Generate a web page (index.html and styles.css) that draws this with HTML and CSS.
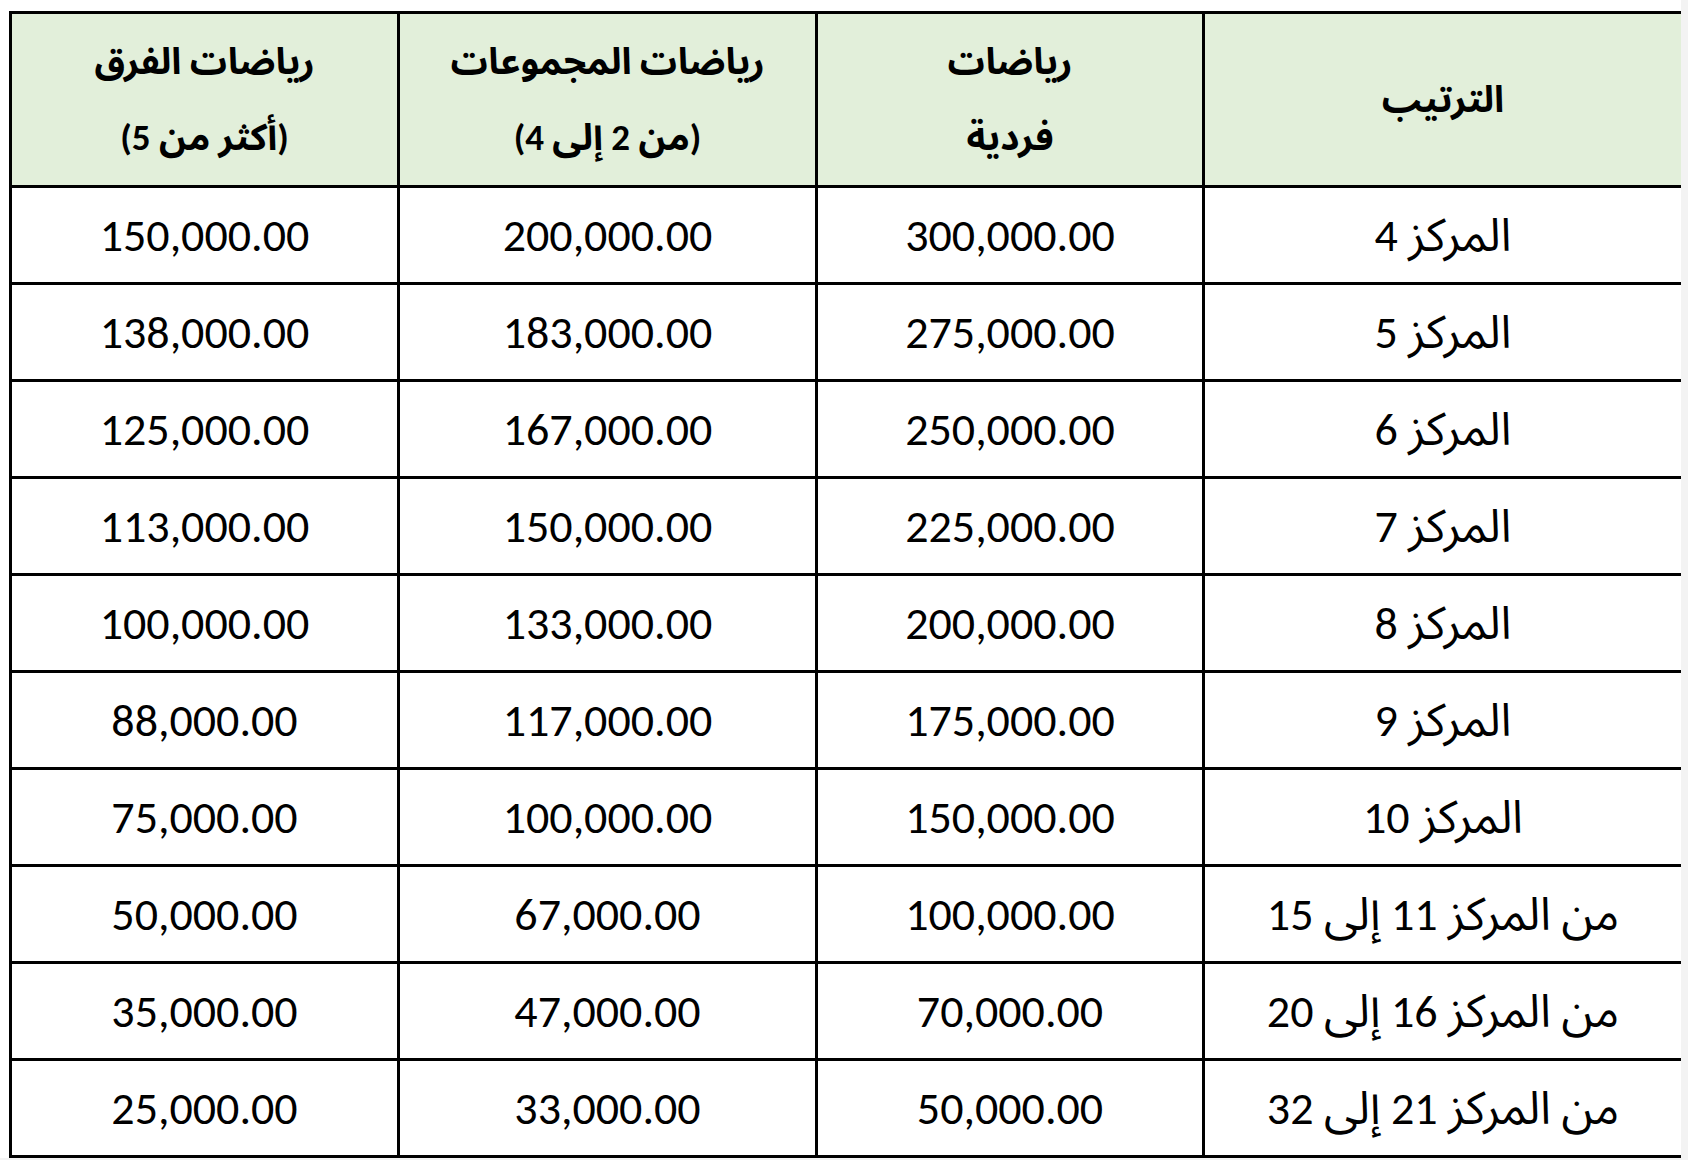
FILE: index.html
```html
<!DOCTYPE html>
<html lang="ar">
<head>
<meta charset="utf-8">
<title>جدول الجوائز</title>
<link rel="stylesheet" href="styles.css">
</head>
<body>
<table class="prizes" dir="rtl">
  <colgroup>
    <col class="c-rank">
    <col class="c-single">
    <col class="c-group">
    <col class="c-team">
  </colgroup>
  <thead>
    <tr>
      <th>الترتيب</th>
      <th>رياضات<br>فردية</th>
      <th>رياضات المجموعات<br>(من 2 إلى 4)</th>
      <th>رياضات الفرق<br>(أكثر من 5)</th>
    </tr>
  </thead>
  <tbody>
    <tr><td>المركز 4</td><td>300,000.00</td><td>200,000.00</td><td>150,000.00</td></tr>
    <tr><td>المركز 5</td><td>275,000.00</td><td>183,000.00</td><td>138,000.00</td></tr>
    <tr><td>المركز 6</td><td>250,000.00</td><td>167,000.00</td><td>125,000.00</td></tr>
    <tr><td>المركز 7</td><td>225,000.00</td><td>150,000.00</td><td>113,000.00</td></tr>
    <tr><td>المركز 8</td><td>200,000.00</td><td>133,000.00</td><td>100,000.00</td></tr>
    <tr><td>المركز 9</td><td>175,000.00</td><td>117,000.00</td><td>88,000.00</td></tr>
    <tr><td>المركز 10</td><td>150,000.00</td><td>100,000.00</td><td>75,000.00</td></tr>
    <tr><td>من المركز 11 إلى 15</td><td>100,000.00</td><td>67,000.00</td><td>50,000.00</td></tr>
    <tr><td>من المركز 16 إلى 20</td><td>70,000.00</td><td>47,000.00</td><td>35,000.00</td></tr>
    <tr><td>من المركز 21 إلى 32</td><td>50,000.00</td><td>33,000.00</td><td>25,000.00</td></tr>
  </tbody>
</table>
</body>
</html>
```

FILE: styles.css
```css
html {
  margin: 0;
  padding: 0;
  background: #f3f3f3;
}

body {
  margin: 0;
  padding: 11px 0 0 9px;
  width: 1672px;
  background: #ffffff;
  font-family: "Carlito", "Lato", "Noto Sans Arabic", "DejaVu Sans", sans-serif;
  color: #000;
}

.prizes {
  width: 1672px;
  border-collapse: collapse;
  table-layout: fixed;
  border: 3px solid #000;
}

.c-rank { width: 479px; }
.c-single { width: 387px; }
.c-group { width: 418px; }
.c-team { width: 388px; }

.prizes th,
.prizes td {
  border: 3px solid #000;
  text-align: center;
  vertical-align: middle;
  padding: 0;
}

.prizes th {
  background: #e2efda;
  height: 171px;
  font-weight: bold;
  font-size: 37px;
  line-height: 76px;
}

.prizes td {
  height: 94px;
  font-size: 46px;
  line-height: 1;
}
```
